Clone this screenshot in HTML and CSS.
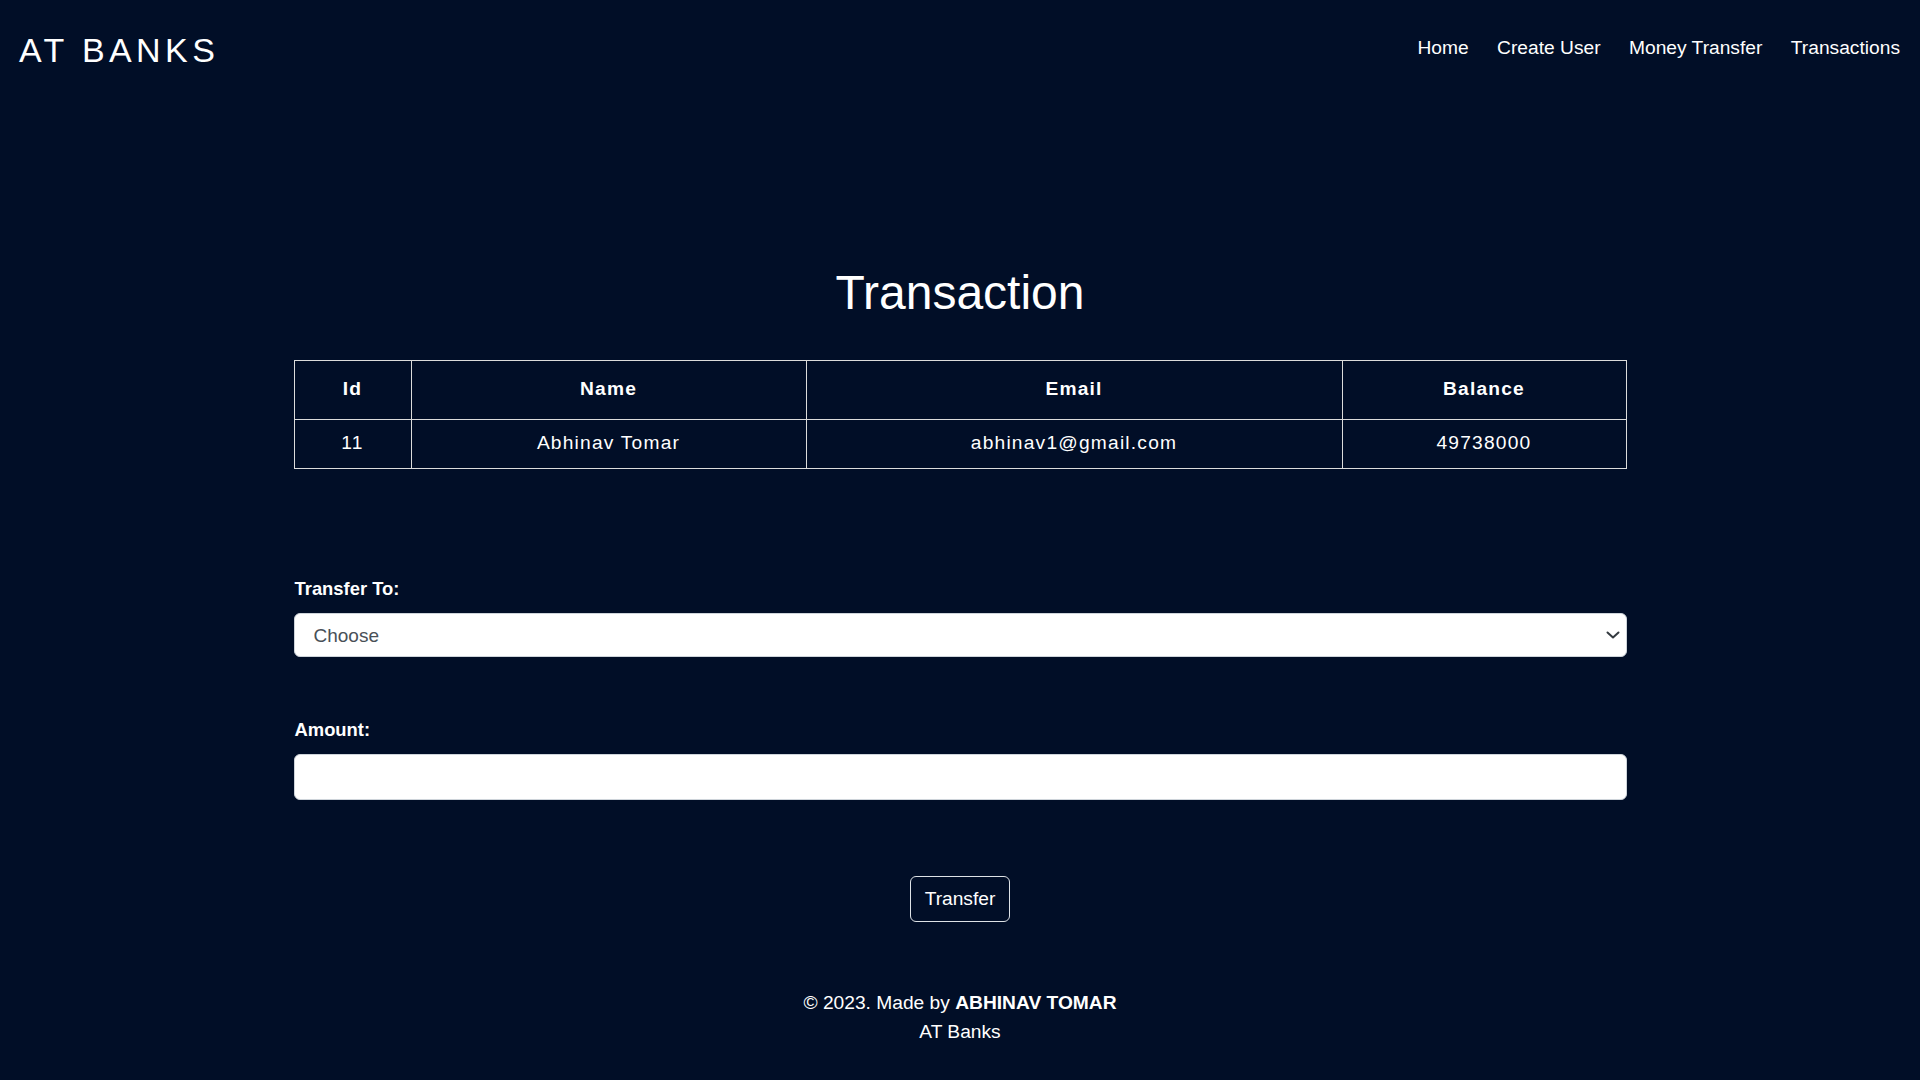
FILE: index.html
```html
<!DOCTYPE html>
<html lang="en">
<head>
<meta charset="utf-8">
<title>AT Banks - Transaction</title>
<link rel="stylesheet" href="styles.css">
</head>
<body>
<header class="site-header">
  <div class="logo">AT BANKS</div>
  <nav class="nav">
    <a href="#" class="nav-link">Home</a>
    <a href="#" class="nav-link">Create User</a>
    <a href="#" class="nav-link">Money Transfer</a>
    <a href="#" class="nav-link">Transactions</a>
  </nav>
</header>
<main class="main">
  <h1 class="title">Transaction</h1>
  <table class="user-table">
    <colgroup>
      <col class="col-id">
      <col class="col-name">
      <col class="col-email">
      <col class="col-balance">
    </colgroup>
    <thead>
      <tr><th>Id</th><th>Name</th><th>Email</th><th>Balance</th></tr>
    </thead>
    <tbody>
      <tr><td>11</td><td>Abhinav Tomar</td><td>abhinav1@gmail.com</td><td>49738000</td></tr>
    </tbody>
  </table>
  <form class="transfer-form">
    <div class="field field-first">
      <label class="label" for="to">Transfer To:</label>
      <div class="select-wrap">
        <select id="to" class="select">
          <option>Choose</option>
        </select>
        <svg class="chevron" width="14" height="10" viewBox="0 0 14 10"><path d="M1.5 2.5 L7 7.5 L12.5 2.5" fill="none" stroke="#343a40" stroke-width="2" stroke-linecap="round" stroke-linejoin="round"/></svg>
      </div>
    </div>
    <div class="field field-second">
      <label class="label" for="amount">Amount:</label>
      <input id="amount" class="input" type="text">
    </div>
    <div class="actions">
      <button type="button" class="btn">Transfer</button>
    </div>
  </form>
</main>
<footer class="footer">
  <div>© 2023. Made by <strong>ABHINAV TOMAR</strong></div>
  <div>AT Banks</div>
</footer>
</body>
</html>
```
FILE: styles.css
```css
html, body {
  margin: 0;
  padding: 0;
}
body {
  background: #010e27;
  color: #ffffff;
  font-family: "Liberation Sans", Arial, sans-serif;
  min-height: 1080px;
}
.site-header {
  display: flex;
  justify-content: space-between;
  align-items: flex-start;
  padding: 31px 20px 0 19px;
}
.logo {
  font-size: 34px;
  letter-spacing: 4.4px;
  line-height: 39px;
}
.nav {
  display: flex;
  gap: 28.5px;
  padding-top: 6px;
}
.nav-link {
  color: #ffffff;
  text-decoration: none;
  font-size: 19.2px;
  line-height: 22px;
}
.main {
  width: 1333px;
  margin: 0 auto;
  padding-top: 195px;
}
.title {
  margin: 0;
  text-align: center;
  font-size: 48px;
  font-weight: normal;
  line-height: 55px;
}
.user-table {
  margin-top: 40px;
  width: 100%;
  border-collapse: collapse;
  table-layout: fixed;
  font-size: 19.2px;
  letter-spacing: 1.2px;
}
.col-id { width: 117px; }
.col-name { width: 395px; }
.col-email { width: 536px; }
.col-balance { width: auto; }
.user-table th,
.user-table td {
  border: 1px solid #dcdcdc;
  text-align: center;
  line-height: 22px;
}
.user-table th {
  font-weight: bold;
  padding: 17px 8px 19px;
}
.user-table td {
  font-weight: normal;
  padding: 12px 8px 14px;
}
.transfer-form {
  display: flex;
  flex-direction: column;
}
.field {
  display: flex;
  flex-direction: column;
}
.field-first {
  margin-top: 109px;
}
.field-second {
  margin-top: 62px;
}
.label {
  font-weight: bold;
  font-size: 18.4px;
  line-height: 21px;
  margin-bottom: 14px;
  padding-left: 1px;
}
.select-wrap {
  position: relative;
}
.select {
  -webkit-appearance: none;
  appearance: none;
  width: 100%;
  height: 44px;
  box-sizing: border-box;
  border: 1px solid #ced4da;
  border-radius: 6px;
  background: #ffffff;
  color: #495057;
  font-family: "Liberation Sans", Arial, sans-serif;
  font-size: 19px;
  padding: 0 40px 0 19px;
  margin: 0;
}
.chevron {
  position: absolute;
  right: 7px;
  top: 17px;
  pointer-events: none;
}
.input {
  width: 100%;
  height: 46px;
  box-sizing: border-box;
  border: 1px solid #ced4da;
  border-radius: 6px;
  background: #ffffff;
  font-family: "Liberation Sans", Arial, sans-serif;
  font-size: 19px;
  padding: 0 12px;
  margin: 0;
}
.actions {
  display: flex;
  justify-content: center;
  margin-top: 76px;
}
.btn {
  background: transparent;
  color: #ffffff;
  border: 1px solid #dee2e6;
  border-radius: 6px;
  font-family: "Liberation Sans", Arial, sans-serif;
  font-size: 19.2px;
  line-height: 22px;
  padding: 11px 14px;
  margin: 0;
}
.footer {
  margin-top: 67px;
  text-align: center;
  font-size: 19.2px;
  line-height: 28.8px;
}
.footer strong {
  font-weight: bold;
}
```
